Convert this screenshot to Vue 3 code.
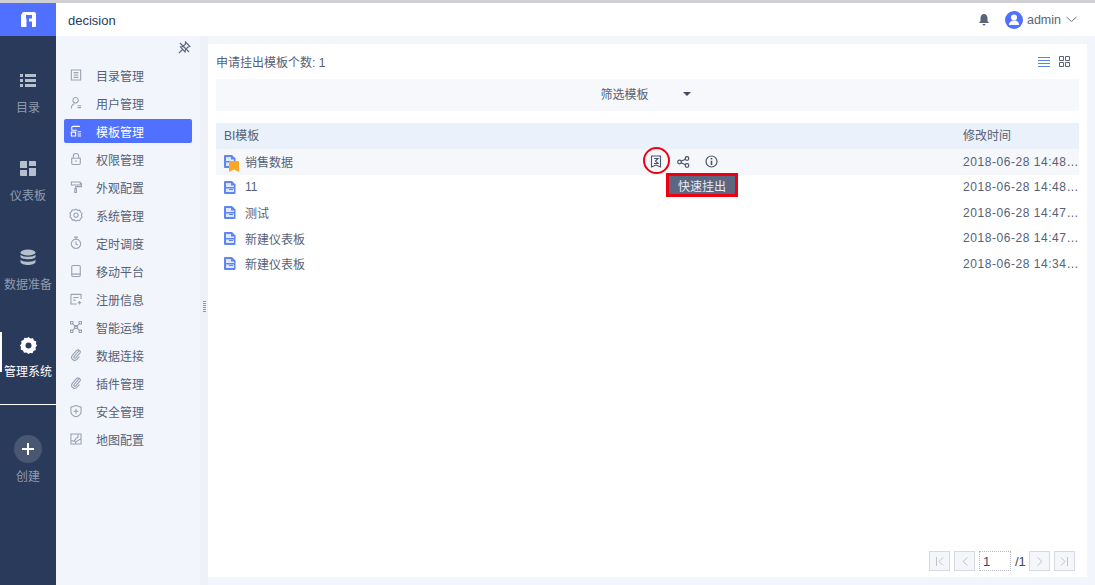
<script setup>
const rail = [
  { label: '目录', icon: 'list' },
  { label: '仪表板', icon: 'dash' },
  { label: '数据准备', icon: 'db' },
  { label: '管理系统', icon: 'gear', active: true }
]
const clip = 'M13 3.500L6.500 11c-1.200 1.500.8 3 2.200 1.700l5.300-6c2-2.800-1.800-5.800-4.500-3.200L4.300 9.500c-3 4 2 8.500 5.700 5l3.500-3.500'
const menu = [
  { label: '目录管理', icon: 'M3 2.500h12v13H3z M6 6h6 M6 9h6 M6 12h6' },
  { label: '用户管理', icon: 'M8.500 2a3.500 3.500 0 1 1-.01 0z M3 16c.2-3.500 1.800-5.500 4-6 M11 12.500h4.500 M11 15h4.500' },
  { label: '模板管理', icon: 'M3.500 8V4.500a1.500 1.500 0 0 1 1.500-1.500h9 M3 8h7 M3 10.500v5h5.500v-5z M11 10h4.500 M11 12.800h4.500 M11 15.500h4.500', active: true },
  { label: '权限管理', icon: 'M3.500 8h11v6.500a1.500 1.500 0 0 1-1.500 1.500H5a1.500 1.500 0 0 1-1.500-1.500z M5.500 8V5.500a3.500 3.500 0 0 1 7 0V8 M9 10.500v2.500' },
  { label: '外观配置', icon: 'M3 2.500h11.500v4H3z M14.500 4.500H16v4H8.500V11 M7.500 11h2v5h-2z' },
  { label: '系统管理', icon: 'M9 1.500l2.200 1.500 2.600-.2 1 2.400 2 1.700-.8 2.600.8 2.600-2 1.500-1 2.400-2.600-.2L9 17l-2.200-1.700-2.600.2-1-2.400-2-1.500.8-2.600-.8-2.600 2-1.700 1-2.400 2.600.2z M9 6.500a2.800 2.800 0 1 1-.01 0z' },
  { label: '定时调度', icon: 'M9 4a6 6 0 1 1-.01 0z M6.500 1.500h5 M9 1.500V4 M9 7v3.500l2.500 1' },
  { label: '移动平台', icon: 'M5 2h8a1.500 1.500 0 0 1 1.500 1.500v11A1.500 1.500 0 0 1 13 16H5a1.500 1.500 0 0 1-1.500-1.500v-11A1.500 1.500 0 0 1 5 2z M3.500 13h11' },
  { label: '注册信息', icon: 'M2.500 3h13v6 M2.500 3v12.500H10 M5.500 7h7 M5.500 10.500h3 M13.500 11.500v4.500 M11.300 13.700h4.400' },
  { label: '智能运维', icon: 'M4 4l10 10 M14 4L4 14 M2 2h3v3H2z M13 2h3v3h-3z M2 13h3v3H2z M13 13h3v3h-3z M7 7h4v4H7z' },
  { label: '数据连接', icon: clip },
  { label: '插件管理', icon: clip },
  { label: '安全管理', icon: 'M9 2l6.500 2v5.500c0 3-2.700 5.700-6.500 7-3.800-1.300-6.500-4-6.500-7V4z M9 6v6.500 M5.800 9.300h6.400' },
  { label: '地图配置', icon: 'M2.500 2.500h13v13h-13z M2.500 11l4.500 1 2-4 2.500-1V2.500 M8.500 15.500V13l7-4.500' }
]
const rows = [
  { name: '销售数据', time: '2018-06-28 14:48:50', hover: true },
  { name: '11', time: '2018-06-28 14:48:22' },
  { name: '测试', time: '2018-06-28 14:47:50' },
  { name: '新建仪表板', time: '2018-06-28 14:47:12' },
  { name: '新建仪表板', time: '2018-06-28 14:34:05' }
]
</script>

<template>
  <div class="page">
    <div class="topline"></div>
    <header class="header">
      <div class="logo">
        <svg width="15" height="15" viewBox="0 0 15 15"><path fill="#fff" d="M0 3l2-3h11a2 2 0 0 1 2 2v12a1 1 0 0 1-1 1h-3V9.500H8V15H1a1 1 0 0 1-1-1z"/><path fill="#5070ff" d="M5 3h6v3.500H8V15H5.500V6.500H5z"/></svg>
      </div>
      <div class="app-name">decision</div>
      <div class="user">
        <svg class="bell" width="12" height="13" viewBox="0 0 12 13"><path fill="#5a6478" d="M6 1c2.200 0 3.500 1.800 3.500 4v3l1.500 2H1l1.500-2V5C2.500 2.800 3.800 1 6 1z M4.500 11h3a1.500 1.500 0 0 1-3 0z"/></svg>
        <svg class="avatar" width="18" height="18" viewBox="0 0 18 18"><circle cx="9" cy="9" r="9" fill="#5070ff"/><circle cx="9" cy="6.500" r="3" fill="#fff"/><path fill="#fff" d="M4 14c0-3 2-4.500 5-4.500s5 1.500 5 4.500z"/></svg>
        <span class="uname">admin</span>
        <svg width="11" height="7" viewBox="0 0 11 7"><path fill="none" stroke="#6b7488" d="M.5 1l5 4.500 5-4.500"/></svg>
      </div>
    </header>
    <div class="body">
      <nav class="rail">
        <div v-for="r in rail" :key="r.label" class="rail-item" :class="{ on: r.active }">
          <svg v-if="r.icon === 'list'" width="16" height="13" viewBox="0 0 16 13"><path fill="#b6bfcd" d="M0 0h3v3H0zM5 0h11v3H5zM0 5h3v3H0zM5 5h11v3H5zM0 10h3v3H0zM5 10h11v3H5z"/></svg>
          <svg v-else-if="r.icon === 'dash'" width="16" height="15" viewBox="0 0 16 15"><path fill="#b6bfcd" d="M0 1a1 1 0 0 1 1-1h6v7H0zM9 0h6a1 1 0 0 1 1 1v4H9zM0 9h7v6H1a1 1 0 0 1-1-1zM9 7h7v7a1 1 0 0 1-1 1H9z"/></svg>
          <svg v-else-if="r.icon === 'db'" width="16" height="16" viewBox="0 0 16 16"><ellipse cx="8" cy="3" rx="7.500" ry="3" fill="#b6bfcd"/><path fill="#b6bfcd" d="M.5 5c1 3 14 3 15 0v2.500c-1 3-14 3-15 0zM.5 10c1 3 14 3 15 0v2.500c-1 4-14 4-15 0z"/></svg>
          <svg v-else width="17" height="17" viewBox="0 0 17 17"><path fill="#fff" d="M8.500 0l2 1.500 2.500-.3 1 2.300 2.300 1-.3 2.500L17 8.500 15.500 10.500l.3 2.500-2.300 1-1 2.300-2.500-.3L8.500 17l-2-1.500-2.500.3-1-2.300-2.300-1 .3-2.500L0 8.500l1.500-2-.3-2.500 2.300-1 1-2.300 2.500.3z"/><circle cx="8.500" cy="8.500" r="3" fill="#2a3a5a"/></svg>
          <span>{{ r.label }}</span>
        </div>
        <div class="rail-sep"></div>
        <div class="create">
          <div class="plus">
            <svg width="12" height="12" viewBox="0 0 12 12"><path stroke="#fff" stroke-width="2" d="M6 0v12M0 6h12"/></svg>
          </div>
          <span>创建</span>
        </div>
      </nav>
      <aside class="side">
        <div class="pin">
          <svg width="13" height="13" viewBox="0 0 13 13"><path fill="none" stroke="#5f6a80" stroke-width="1.200" d="M7.500 1l4.500 4.500-2 .5-2.500 2.500-.5 2.500L2.500 6l2.500-.5L7.500 3zM1 12l3.500-3.500M2 2l9 9"/></svg>
        </div>
        <div v-for="m in menu" :key="m.label" class="menu-item" :class="{ on: m.active }">
          <svg width="14" height="14" viewBox="0 0 18 18"><path fill="none" stroke="currentColor" stroke-width="1.400" :d="m.icon"/></svg>
          <span>{{ m.label }}</span>
        </div>
      </aside>
      <div class="split"><i></i></div>
      <main class="main">
        <div class="content">
          <div class="title-row">
            <span>申请挂出模板个数: 1</span>
            <div class="views">
              <svg width="12" height="10" viewBox="0 0 12 10"><path stroke="#5a82e8" d="M0 .5h12M0 3.500h12M0 6.500h12M0 9.500h12"/></svg>
              <svg width="11" height="11" viewBox="0 0 11 11"><path fill="none" stroke="#5a6478" d="M.5.500h4v4h-4zM6.500.500h4v4h-4zM.5 6.500h4v4h-4zM6.500 6.500h4v4h-4z"/></svg>
            </div>
          </div>
          <div class="filter">
            <span>筛选模板</span>
            <i class="caret"></i>
          </div>
          <div class="thead"><span class="c1">BI模板</span><span class="c2">修改时间</span></div>
          <div v-for="(r, i) in rows" :key="i" class="row" :class="{ hover: r.hover }">
            <div class="c1 name">
              <span class="file">
                <svg width="12" height="13" viewBox="0 0 12 13"><path fill="#5f85f2" d="M1 0h7l3.500 3.500V12a1 1 0 0 1-1 1H1a1 1 0 0 1-1-1V1a1 1 0 0 1 1-1z"/><path fill="#dfe7fc" d="M2 2h5v2.500h3V6H2zM2 7.500h8V11H2z"/><path fill="#5f85f2" d="M5 8h4v1H5z"/></svg>
                <svg v-if="r.hover" class="badge" width="10" height="11" viewBox="0 0 10 11"><path fill="#f9a825" d="M1 0h8a1 1 0 0 1 1 1v10L5 8.500 0 11V1a1 1 0 0 1 1-1z"/></svg>
              </span>
              <span>{{ r.name }}</span>
            </div>
            <div v-if="r.hover" class="acts">
              <svg width="12" height="13" viewBox="0 0 12 13"><path fill="none" stroke="#4b5568" stroke-width="1.100" d="M1.500 1h9v11l-4.500-2-4.500 2z M4 3.500h4L5.500 6 8 8.500H4"/></svg>
              <svg width="13" height="12" viewBox="0 0 13 12"><g fill="none" stroke="#4b5568" stroke-width="1.200"><circle cx="2.500" cy="6" r="1.800"/><circle cx="10" cy="2.500" r="1.800"/><circle cx="10" cy="9.500" r="1.800"/><path d="M4 5.200l4.500-2M4 6.800l4.500 2"/></g></svg>
              <svg width="13" height="13" viewBox="0 0 13 13"><circle cx="6.500" cy="6.500" r="5.500" fill="none" stroke="#4b5568" stroke-width="1.200"/><path stroke="#4b5568" stroke-width="1.600" d="M6.500 3v1.600M6.500 5.800V10"/></svg>
            </div>
            <div class="c2 time">{{ r.time }}</div>
          </div>
          <div class="tip">快速挂出</div>
          <div class="ring"></div>
          <div class="pager">
            <button class="pg"><svg width="9" height="9" viewBox="0 0 9 9"><path fill="none" stroke="#bcc3d0" d="M1.500 0v9M8 .5L4 4.500l4 4"/></svg></button>
            <button class="pg"><svg width="6" height="9" viewBox="0 0 6 9"><path fill="none" stroke="#bcc3d0" d="M5.500.5L1 4.500l4.500 4"/></svg></button>
            <span class="pg-input">1</span>
            <span class="pg-total">/1</span>
            <button class="pg"><svg width="6" height="9" viewBox="0 0 6 9"><path fill="none" stroke="#bcc3d0" d="M.5.500L5 4.500l-4.500 4"/></svg></button>
            <button class="pg"><svg width="9" height="9" viewBox="0 0 9 9"><path fill="none" stroke="#bcc3d0" d="M7.500 0v9M1 .5l4 4-4 4"/></svg></button>
          </div>
        </div>
      </main>
    </div>
  </div>
</template>

<style>
html, body { margin: 0; padding: 0; background: #f2f5fb; }
</style>

<style scoped>
.page {
  width: 1095px; height: 585px; overflow: hidden;
  display: flex; flex-direction: column;
  font-family: "Liberation Sans", "Noto Sans CJK SC", sans-serif;
  font-size: 12px; color: #566176;
  background: #f2f5fb;
}
.topline { height: 3px; background: #cfd0d3; flex: none; }
.header { height: 33px; flex: none; display: flex; align-items: center; background: #fff; }
.logo { width: 56px; height: 33px; background: #5070ff; display: flex; align-items: center; justify-content: center; flex: none; }
.app-name { margin-left: 12px; padding-top: 2px; font-size: 13px; color: #2a3a5a; flex: 1; }
.user { display: flex; align-items: center; margin-right: 18px; }
.bell { margin-right: 15px; }
.uname { margin: 0 5px 0 4px; font-size: 12.500px; color: #5a6478; }
.avatar { margin-right: 0; }
.body { flex: 1; min-height: 0; display: flex; }
.rail { width: 56px; flex: none; background: #2a3a5a; display: flex; flex-direction: column; align-items: center; color: #8f9ab0; padding-top: 36px; box-sizing: border-box; }
.rail-item { width: 56px; height: 88.300px; flex: none; box-sizing: border-box; display: flex; flex-direction: column; align-items: center; gap: 11px; position: relative; }
.rail-item svg { height: 17px; }
.rail-item span { line-height: 16px; white-space: nowrap; }
.rail-item.on { color: #fff; }
.rail-item.on span { margin-top: -1px; }
.rail-item.on::before { content: ""; position: absolute; left: 0; top: -5px; width: 2px; height: 40px; background: #fff; }
.rail-sep { width: 56px; height: 1px; background: #fff; margin-top: -21px; flex: none; }
.create { display: flex; flex-direction: column; align-items: center; gap: 4px; margin-top: 30px; }
.plus { width: 28px; height: 28px; border-radius: 50%; background: #4a5772; display: flex; align-items: center; justify-content: center; }
.side { width: 144px; flex: none; background: #f2f5fb; padding: 5px 8px 0; box-sizing: border-box; }
.pin { height: 22px; display: flex; justify-content: flex-end; padding-right: 1px; }
.menu-item { height: 24px; margin-bottom: 4px; display: flex; align-items: center; border-radius: 2px; padding-left: 5px; gap: 13px; color: #9aa2b2; }
.menu-item span { color: #566176; }
.menu-item svg { flex: none; }
.menu-item.on { background: #5070ff; color: #fff; }
.menu-item.on span { color: #fff; }
.split { width: 8px; flex: none; background: #eef1f7; display: flex; align-items: center; justify-content: center; padding-bottom: 8px; box-sizing: border-box; }
.split i { width: 3px; height: 11px; background: repeating-linear-gradient(#8f97a8 0 1px, transparent 1px 2px); }
.main { flex: 1; min-width: 0; padding: 8px 8px 8px 0; box-sizing: border-box; background: #f2f5fb; }
.content { height: 100%; background: #fff; padding: 0 8px; box-sizing: border-box; position: relative; display: flex; flex-direction: column; }
.title-row { height: 35px; flex: none; display: flex; align-items: center; justify-content: space-between; }
.views { display: flex; align-items: center; gap: 9px; padding-right: 9px; }
.filter { height: 32px; flex: none; background: #f6f8fb; display: flex; align-items: center; justify-content: center; gap: 34px; margin-bottom: 12px; padding: 0 4px 3px 0; box-sizing: border-box; }
.caret { width: 0; height: 0; border: 4px solid transparent; border-top: 4px solid #3f4a60; border-bottom: 0; }
.thead { height: 26px; flex: none; background: #eaf1fb; display: flex; align-items: center; padding-bottom: 3px; box-sizing: border-box; }
.c1 { width: 747px; padding-left: 8px; box-sizing: border-box; flex: none; }
.c2 { flex: 1; min-width: 0; }
.row { height: 25.500px; flex: none; display: flex; align-items: center; position: relative; }
.row.hover { background: #f5f7fb; }
.name { display: flex; align-items: center; gap: 8px; }
.file { width: 13px; height: 13px; display: block; position: relative; flex: none; }
.file > svg:first-child { display: block; }
.badge { position: absolute; left: 5px; top: 6px; }
.acts { position: absolute; left: 434px; top: 0; height: 100%; display: flex; align-items: center; gap: 15px; }
.time { white-space: nowrap; overflow: hidden; text-overflow: ellipsis; letter-spacing: .55px; }
.tip { position: absolute; left: 458px; top: 129px; width: 72px; height: 24px; box-sizing: border-box; border: 3px solid #ee0011; background: #5c6680; color: #e8ebf2; display: flex; align-items: center; justify-content: center; }
.ring { position: absolute; left: 435px; top: 103px; width: 27px; height: 27px; box-sizing: border-box; border: 2.500px solid #ee0011; border-radius: 50%; }
.pager { position: absolute; right: 12px; bottom: 6px; display: flex; align-items: center; gap: 4px; }
.pg { width: 21px; height: 20px; padding: 0; background: #f4f6fa; border: 1px solid #d5d9e2; display: flex; align-items: center; justify-content: center; box-sizing: border-box; }
.pg-input { width: 32px; height: 20px; box-sizing: border-box; border: 1px dotted #b5bac6; padding-left: 3px; line-height: 19px; color: #3f4a60; font-size: 13px; }
.pg-total { width: 11px; font-size: 13px; color: #3f4a60; margin-right: -1px; }
</style>
